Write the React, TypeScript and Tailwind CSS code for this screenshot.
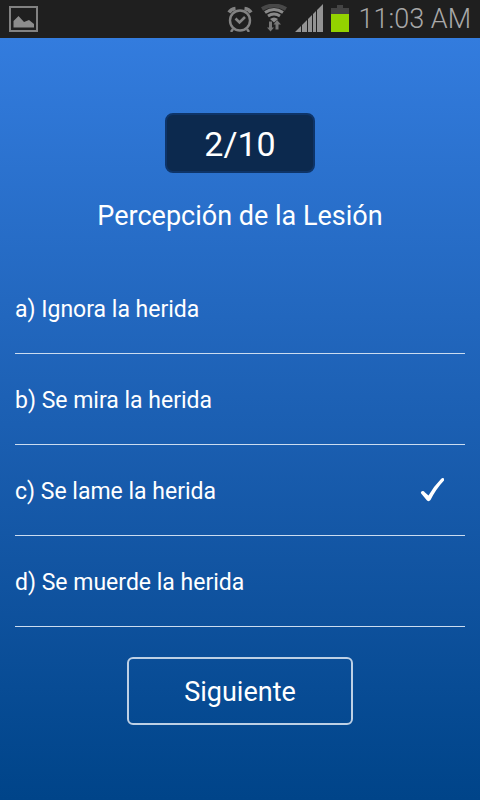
import { useState } from "react";

const options = [
  { id: "a", text: "Ignora la herida" },
  { id: "b", text: "Se mira la herida" },
  { id: "c", text: "Se lame la herida" },
  { id: "d", text: "Se muerde la herida" },
];

function PictureIcon() {
  return (
    <svg width="29" height="26" viewBox="0 0 29 26" aria-hidden="true">
      <rect x="1" y="1" width="27" height="24" fill="none" stroke="#828282" strokeWidth="2" />
      <path d="M4.500 21.500V15L9.500 10L15 16L20 14L25 18V21.500Z" fill="#8c8c8c" />
    </svg>
  );
}

function AlarmIcon() {
  return (
    <svg width="26" height="27" viewBox="0 0 26 27" fill="none" stroke="#828282" aria-hidden="true">
      <circle cx="13" cy="15.500" r="10" strokeWidth="2.400" />
      <path d="M8.500 13.500L12.500 17.500L18 12" strokeWidth="2.600" />
      <path d="M2 7.500Q4 4 8.500 3.500M24 7.500Q22 4 17.500 3.500" strokeWidth="3.600" />
      <path d="M6 24L4 27M20 24L22 27" strokeWidth="2.400" />
    </svg>
  );
}

function WifiIcon() {
  return (
    <svg width="26" height="28" viewBox="0 0 26 28" fill="none" aria-hidden="true">
      <path d="M1 5Q13 -2 25 5" stroke="#484848" strokeWidth="4" />
      <path d="M4 8.500Q13 2.500 22 8.500M7 12Q13 8 19 12" stroke="#8a8a8a" strokeWidth="3" />
      <path d="M9 15Q13 12 17 15L13 18.500Z" fill="#8a8a8a" />
      <path d="M8 17.500H11V23.500H13L9.500 27.500L6 23.500H8Z" fill="#777777" />
      <path d="M14.500 25.500V20.500H12.500L16 16L20 20.500H17.500V25.500Z" fill="#777777" />
    </svg>
  );
}

function SignalIcon() {
  return (
    <svg width="28" height="28" viewBox="0 0 28 28" fill="#939393" aria-hidden="true">
      <path d="M0 28L6 22V28ZM7 28V21L12 16V28ZM13 28V15L17 11V28ZM18 28V10L21 7V28ZM22 28V6L28 0V28Z" />
    </svg>
  );
}

function BatteryIcon() {
  return (
    <svg width="18" height="27" viewBox="0 0 18 27" aria-hidden="true">
      <path d="M6 0H12V3H18V9H0V3H6Z" fill="#444444" />
      <rect y="9" width="18" height="18" fill="#93d200" />
    </svg>
  );
}

export default function App() {
  const [selected, setSelected] = useState("c");

  return (
    <div className="flex min-h-screen flex-col bg-[#1f1f1f] font-['Roboto',sans-serif] text-white">
      <header className="flex h-[38px] items-center justify-between px-[9px]">
        <PictureIcon />
        <div className="flex items-center gap-2.5">
          <div className="flex items-center gap-2 pb-0.5">
            <AlarmIcon />
            <WifiIcon />
            <SignalIcon />
            <BatteryIcon />
          </div>
          <time className="text-[27px] leading-8 font-light text-[#a8a8a8]">11:03 AM</time>
        </div>
      </header>

      <main className="flex grow flex-col items-center bg-linear-to-b from-[#337cde] to-[#004489] px-[15px] pt-[75px] pb-[75px]">
        <p className="flex h-[60px] w-[150px] items-center justify-center rounded-lg border-2 border-[#0e3468] bg-[#0c294e] pt-0.5 text-[34px] leading-10">
          2/10
        </p>

        <fieldset className="flex w-full flex-col items-center">
          <legend className="w-full pt-[27px] pb-[31px] text-center text-[27px] leading-8">
            Percepción de la Lesión
          </legend>
          {options.map((option) => (
            <label
              key={option.id}
              className="flex h-[91px] w-full cursor-pointer items-center justify-between border-b border-[#cbdcf0] pr-5 text-[23px] leading-7"
            >
              <input
                type="radio"
                name="answer"
                value={option.id}
                checked={selected === option.id}
                onChange={() => setSelected(option.id)}
                className="peer sr-only"
              />
              <span className="pt-1 peer-focus-visible:underline">
                {option.id}) {option.text}
              </span>
              {selected === option.id && (
                <svg width="25" height="24" viewBox="0 0 25 24" fill="white" aria-hidden="true">
                  <path d="M1 14Q3 12 5 14.500L8.500 17.500Q14 8 21 1Q22.500 -0.500 24 0.500V2.500Q16 11 10.500 22Q9 24 7 22.500L2 16.500Q0.500 15 1 14Z" />
                </svg>
              )}
            </label>
          ))}
        </fieldset>

        <button
          type="button"
          className="mt-[30px] h-[68px] w-[226px] cursor-pointer rounded-md border-2 border-[#bdd0e5] pt-0.5 text-[27px] leading-8"
        >
          Siguiente
        </button>
      </main>
    </div>
  );
}
